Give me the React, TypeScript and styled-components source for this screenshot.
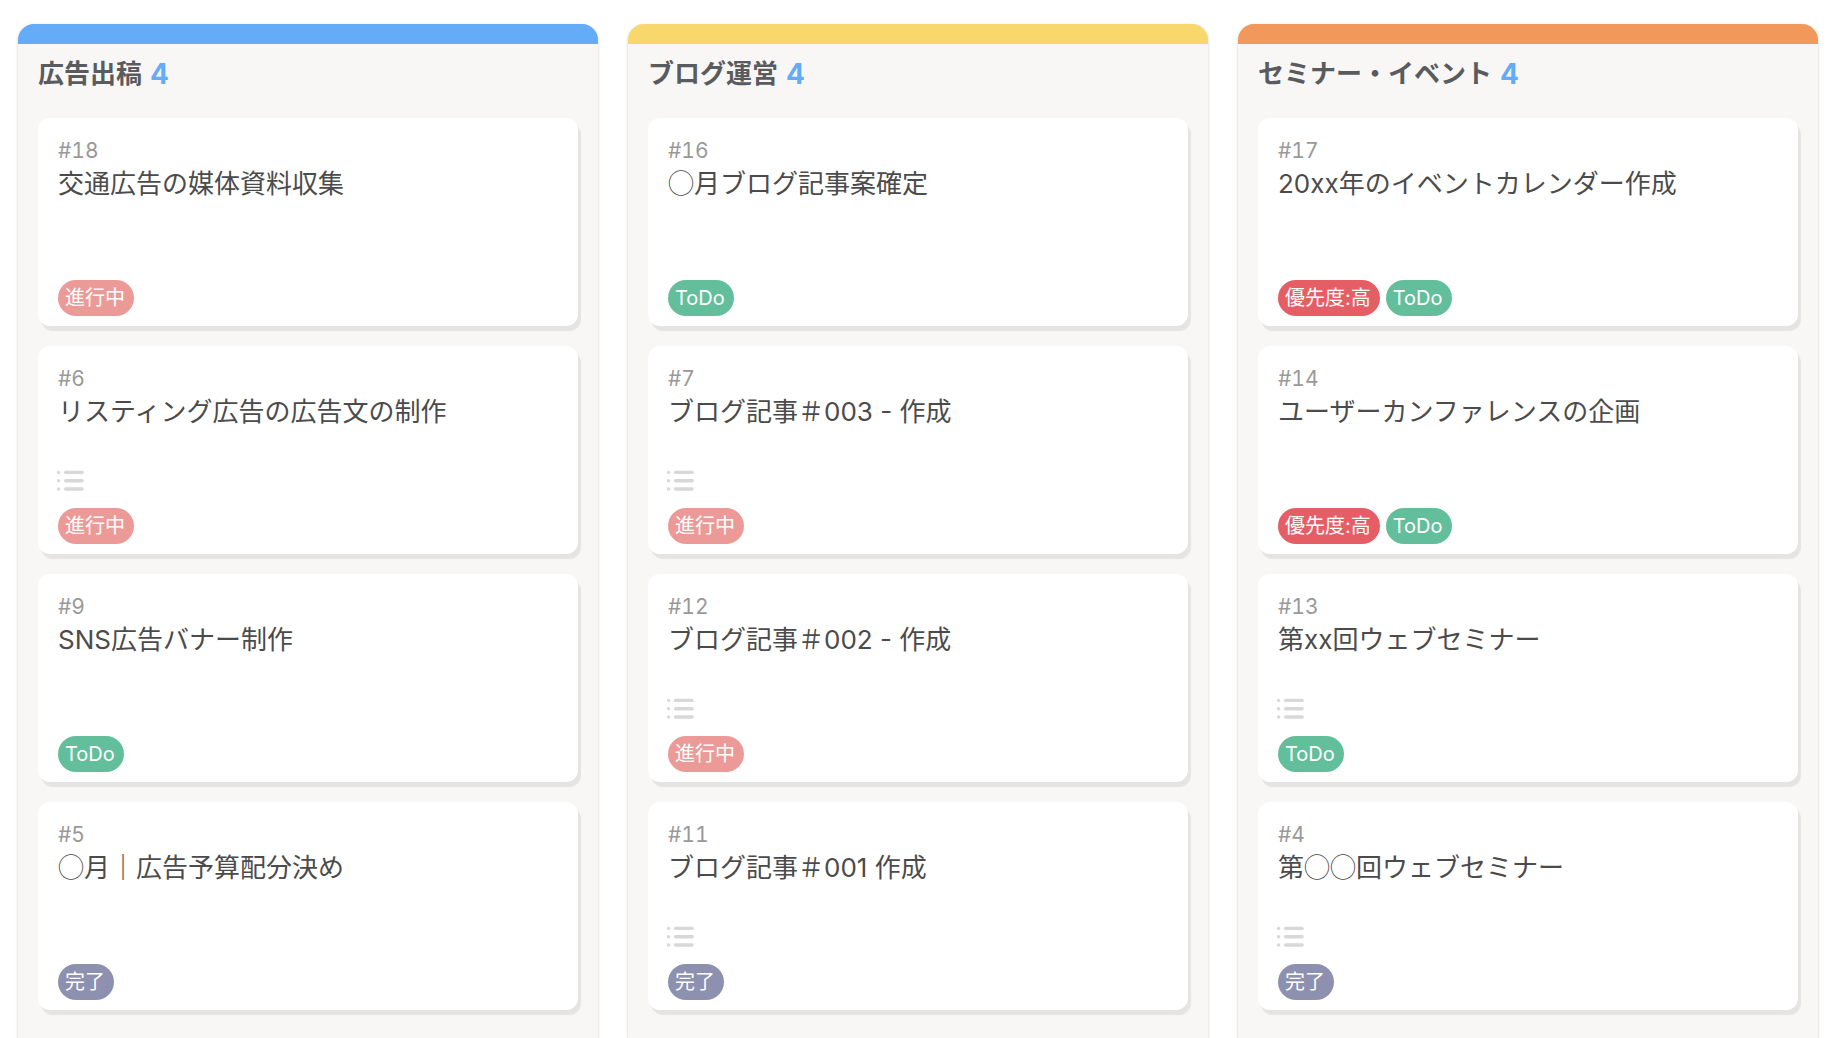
import React from "react";
import styled, { createGlobalStyle } from "styled-components";

const GlobalStyle = createGlobalStyle`
  *, *::before, *::after { box-sizing: border-box; }
  body {
    margin: 0;
    background: #ffffff;
    color: #4b4b4b;
    font-family: Inter, "Noto Sans CJK JP", sans-serif;
  }
  h2, h3, p, ul { margin: 0; padding: 0; }
  ul { list-style: none; }
`;

const Board = styled.main`
  display: grid;
  grid-template-columns: repeat(3, minmax(0, 1fr));
  gap: 30px;
  min-height: 100vh;
  padding: 24px 18px 0;
`;

const Column = styled.section<{ $accent: string }>`
  background: #f8f7f5;
  border-top: 20px solid ${(p) => p.$accent};
  border-radius: 16px 16px 0 0;
  box-shadow: 0 1px 3px rgba(0, 0, 0, 0.22);
  padding: 0 20px 28px;
`;

const ColumnHeader = styled.header`
  display: flex;
  align-items: center;
  gap: 8px;
  height: 60px;
  margin-bottom: 14px;
`;

const ColumnTitle = styled.h2`
  color: #595b5f;
  font-size: 26px;
  font-weight: 700;
  line-height: 36px;
`;

const Count = styled.span`
  color: #64abf8;
  font-size: 28px;
  font-weight: 700;
  line-height: 36px;
`;

const CardList = styled.ul`
  display: flex;
  flex-direction: column;
  gap: 20px;
`;

const CardItem = styled.li`
  display: flex;
  flex-direction: column;
  min-height: 208px;
  padding: 20px 20px 10px;
  background: #ffffff;
  border-radius: 12px;
  box-shadow: 3px 5px 1px #e5e4e2;
`;

const CardId = styled.p`
  color: #999999;
  font-size: 21px;
  font-variant-numeric: tabular-nums;
  line-height: 26px;
`;

const CardTitle = styled.h3`
  font-size: 26px;
  font-weight: 400;
  line-height: 40px;
`;

const Circle = styled.span`
  font-family: "Noto Sans CJK JP", sans-serif;
  line-height: 1;
`;

const CardFooter = styled.div`
  display: flex;
  flex-direction: column;
  gap: 16px;
  margin-top: auto;
`;

const ListIcon = styled.svg`
  display: block;
  width: 26px;
  height: 22px;
  overflow: visible;
  stroke: #d8d8d8;
  stroke-width: 3.4;
  stroke-linecap: round;
`;

const Badges = styled.div`
  display: flex;
  gap: 6px;
`;

const Badge = styled.span<{ $color: string }>`
  padding: 0 9px 0 7px;
  border-radius: 18px;
  background: ${(p) => p.$color};
  color: #ffffff;
  font-size: 20px;
  line-height: 36px;
  white-space: nowrap;
`;

const labels = {
  doing: { text: "進行中", color: "#ec9a98" },
  todo: { text: "ToDo", color: "#63be9b" },
  high: { text: "優先度:高", color: "#e55e65" },
  done: { text: "完了", color: "#8d90ae" },
};

type Label = keyof typeof labels;

interface Task {
  id: number;
  title: string;
  tags: Label[];
  checklist?: boolean;
}

const columns: { name: string; accent: string; tasks: Task[] }[] = [
  {
    name: "広告出稿",
    accent: "#64abf8",
    tasks: [
      { id: 18, title: "交通広告の媒体資料収集", tags: ["doing"] },
      { id: 6, title: "リスティング広告の広告文の制作", tags: ["doing"], checklist: true },
      { id: 9, title: "SNS広告バナー制作", tags: ["todo"] },
      { id: 5, title: "◯月｜広告予算配分決め", tags: ["done"] },
    ],
  },
  {
    name: "ブログ運営",
    accent: "#f8d76c",
    tasks: [
      { id: 16, title: "◯月ブログ記事案確定", tags: ["todo"] },
      { id: 7, title: "ブログ記事＃003 - 作成", tags: ["doing"], checklist: true },
      { id: 12, title: "ブログ記事＃002 - 作成", tags: ["doing"], checklist: true },
      { id: 11, title: "ブログ記事＃001 作成", tags: ["done"], checklist: true },
    ],
  },
  {
    name: "セミナー・イベント",
    accent: "#f2985a",
    tasks: [
      { id: 17, title: "20xx年のイベントカレンダー作成", tags: ["high", "todo"] },
      { id: 14, title: "ユーザーカンファレンスの企画", tags: ["high", "todo"] },
      { id: 13, title: "第xx回ウェブセミナー", tags: ["todo"], checklist: true },
      { id: 4, title: "第◯◯回ウェブセミナー", tags: ["done"], checklist: true },
    ],
  },
];

function Checklist() {
  return (
    <ListIcon viewBox="0 0 26 22" aria-hidden="true">
      <path d="M.6 2.4h0M7.6 2.4h16.5M.6 10.7h0M7.6 10.7h16.5M.6 19h0M7.6 19h16.5" />
    </ListIcon>
  );
}

// Inter has its own oversized ◯, so the circles are set in the Japanese face.
function TitleText({ text }: { text: string }) {
  return (
    <CardTitle>
      {text
        .split(/(◯+)/)
        .map((part, i) => (part.startsWith("◯") ? <Circle key={i}>{part}</Circle> : part))}
    </CardTitle>
  );
}

function Card({ task }: { task: Task }) {
  return (
    <CardItem>
      <CardId>#{task.id}</CardId>
      <TitleText text={task.title} />
      <CardFooter>
        {task.checklist && <Checklist />}
        <Badges>
          {task.tags.map((tag) => (
            <Badge key={tag} $color={labels[tag].color}>
              {labels[tag].text}
            </Badge>
          ))}
        </Badges>
      </CardFooter>
    </CardItem>
  );
}

export default function App() {
  return (
    <>
      <GlobalStyle />
      <Board lang="ja">
        {columns.map((column) => (
          <Column key={column.name} $accent={column.accent}>
            <ColumnHeader>
              <ColumnTitle>{column.name}</ColumnTitle>
              <Count>{column.tasks.length}</Count>
            </ColumnHeader>
            <CardList>
              {column.tasks.map((task) => (
                <Card key={task.id} task={task} />
              ))}
            </CardList>
          </Column>
        ))}
      </Board>
    </>
  );
}
